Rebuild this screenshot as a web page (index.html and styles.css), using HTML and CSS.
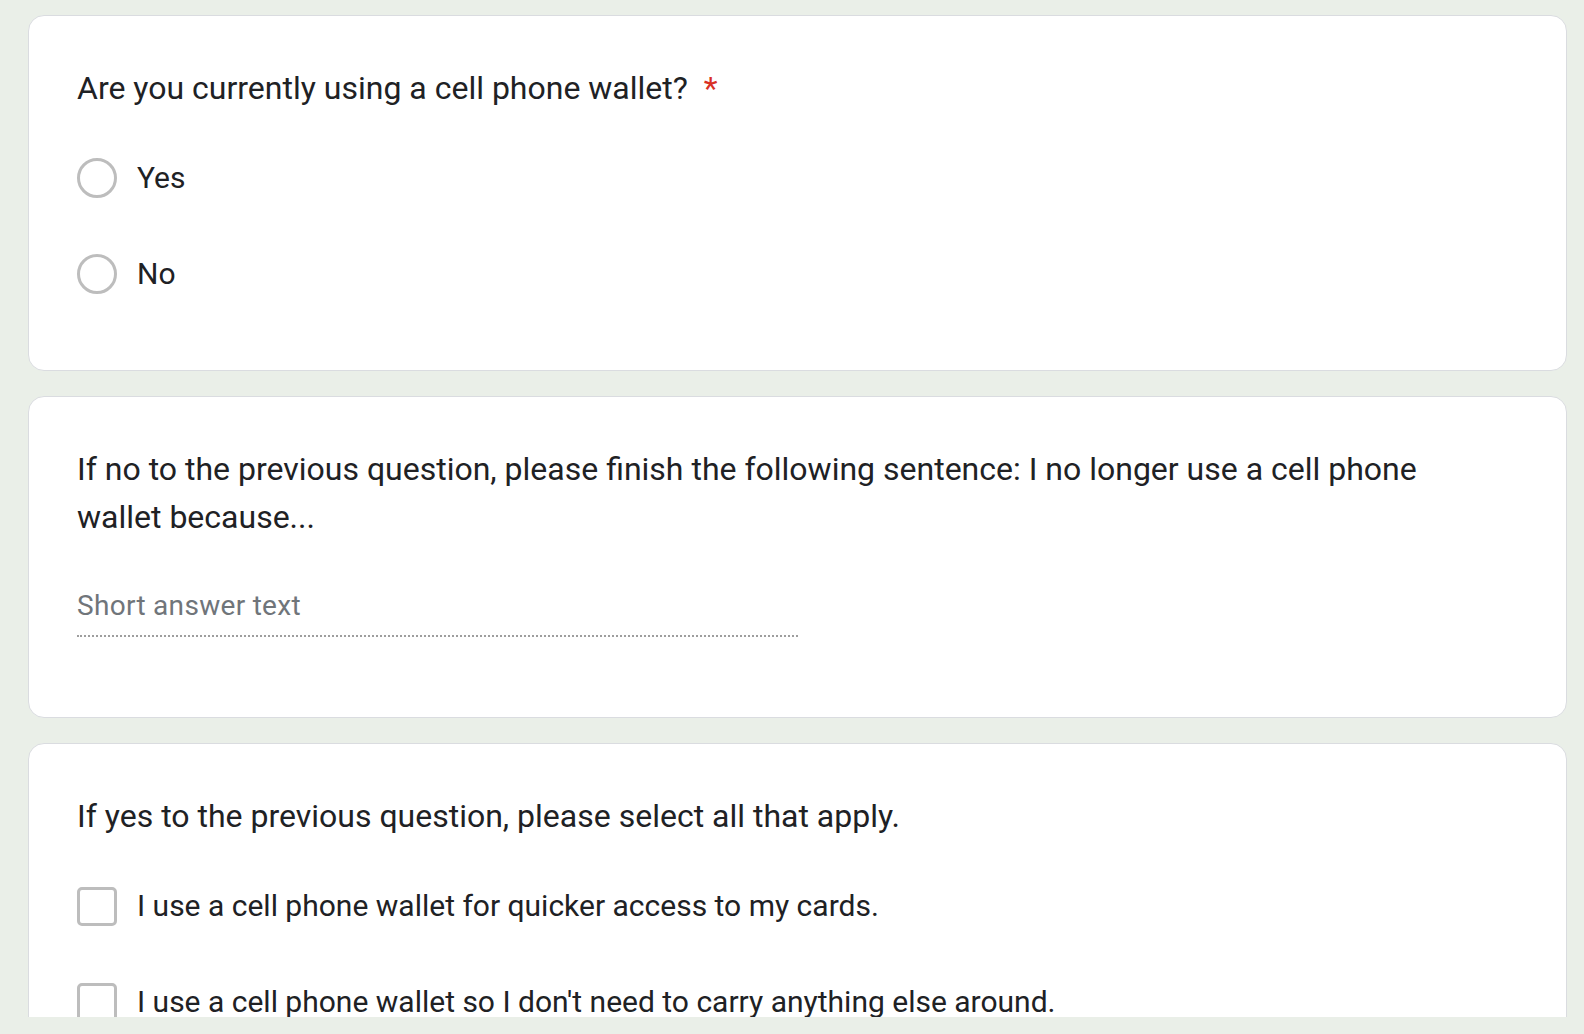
FILE: index.html
```html
<!DOCTYPE html>
<html lang="en">
<head>
<meta charset="utf-8">
<title>Form</title>
<link rel="stylesheet" href="styles.css">
</head>
<body>
<div class="viewport">
  <div class="list">
    <section class="card">
      <div class="title">Are you currently using a cell phone wallet? <span class="req">*</span></div>
      <div class="options">
        <div class="option"><span class="radio"></span><span class="label">Yes</span></div>
        <div class="option"><span class="radio"></span><span class="label">No</span></div>
      </div>
    </section>
    <section class="card">
      <div class="title">If no to the previous question, please finish the following sentence: I no longer use a cell phone wallet because...</div>
      <div class="short">
        <div class="placeholder">Short answer text</div>
      </div>
    </section>
    <section class="card">
      <div class="title">If yes to the previous question, please select all that apply.</div>
      <div class="options">
        <div class="option"><span class="check"></span><span class="label">I use a cell phone wallet for quicker access to my cards.</span></div>
        <div class="option"><span class="check"></span><span class="label">I use a cell phone wallet so I don't need to carry anything else around.</span></div>
      </div>
    </section>
  </div>
</div>
</body>
</html>
```

FILE: styles.css
```css
html, body {
  margin: 0;
  padding: 0;
  background: #eaefe8;
}
body {
  font-family: Roboto, "Liberation Sans", Arial, sans-serif;
  color: #202124;
  height: 1034px;
  overflow: hidden;
}
.viewport {
  height: 1017px;
  overflow: hidden;
}
.list {
  padding: 15px 0 0 28px;
  width: 1539px;
  display: flex;
  flex-direction: column;
  gap: 25px;
}
.card {
  background: #fff;
  border: 1px solid #dadce0;
  border-radius: 16px;
  padding: 48px;
}
.title {
  font-size: 32px;
  line-height: 48px;
  max-width: 1400px;
}
.req {
  color: #d93025;
  padding-left: 8px;
}
.options {
  margin-top: 18px;
  display: flex;
  flex-direction: column;
}
.option {
  height: 96px;
  display: flex;
  align-items: center;
  gap: 20px;
}
.radio {
  width: 40px;
  height: 40px;
  box-sizing: border-box;
  border: 3.5px solid #bdbdbd;
  border-radius: 50%;
  flex: none;
}
.check {
  width: 40px;
  height: 39px;
  box-sizing: border-box;
  border: 3.5px solid #bdbdbd;
  border-radius: 5px;
  flex: none;
}
.label {
  font-size: 30px;
  line-height: 40px;
}
.short {
  margin-top: 45px;
  margin-bottom: 32px;
  width: 721px;
  border-bottom: 2px dotted #9e9e9e;
  padding-bottom: 9px;
}
.placeholder {
  font-size: 28px;
  line-height: 40px;
  color: #70757a;
  letter-spacing: 0.3px;
}
```
